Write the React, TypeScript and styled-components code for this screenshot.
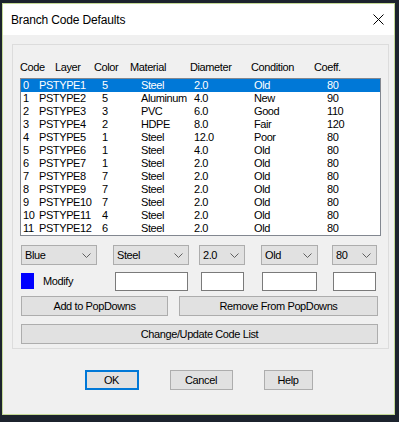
import React, { useState } from 'react';
import styled, { createGlobalStyle } from 'styled-components';

const GlobalStyle = createGlobalStyle`
    html, body {
        margin: 0;
        padding: 0;
        background: #1c232d;
    }
    body {
        font-family: "Liberation Sans", Arial, sans-serif;
        font-size: 11px;
        letter-spacing: -0.4px;
        color: #000;
    }
`;

const Screen = styled.div`
    width: 399px;
    height: 422px;
    padding: 3px 0 0 2px;
    box-sizing: border-box;
    overflow: hidden;
`;

const Window = styled.div`
    width: 393px;
    height: 412px;
    box-sizing: border-box;
    border: 1px solid #c3d896;
    background: #f0f0f0;
    display: flex;
    flex-direction: column;
`;

const TitleBar = styled.div`
    height: 31px;
    background: #fff;
    display: flex;
    align-items: center;
    justify-content: space-between;
    padding: 0 9px 0 8px;
    font-size: 12px;
    letter-spacing: -0.15px;
`;

const CloseIcon = styled.svg`
    width: 11px;
    height: 11px;
    margin-right: 1px;
`;

const Body = styled.div`
    flex: 1;
    display: flex;
    flex-direction: column;
    padding: 9px 5px 0 9px;
`;

const GroupBox = styled.div`
    border: 1px solid #dcdcdc;
    padding: 16px 8px 4px 7px;
    display: flex;
    flex-direction: column;
`;

const HeaderRow = styled.div`
    display: grid;
    grid-template-columns: 35px 39px 36px 60px 61px 63px 1fr;
    height: 13px;
    line-height: 13px;
    margin-bottom: 4px;
`;

const ListBox = styled.div`
    width: 361px;
    height: 158px;
    box-sizing: border-box;
    border: 1px solid #828790;
    background: #fff;
    display: flex;
    flex-direction: column;
`;

const ListRow = styled.div<{ $selected?: boolean }>`
    display: grid;
    grid-template-columns: 16px 63px 39px 53px 60px 73px 1fr;
    height: 13px;
    line-height: 13px;
    padding-left: 2px;
    background: ${p => (p.$selected ? '#0078d7' : 'transparent')};
    color: ${p => (p.$selected ? '#fff' : '#000')};
`;

const FieldGrid = styled.div`
    display: grid;
    grid-template-columns: 76px 16px 76px 10px 46px 16px 57px 14px 45px;
    grid-template-rows: 20px 19px;
    row-gap: 7px;
    margin: 9px 0 0 1px;
`;

const Combo = styled.div<{ $col: number }>`
    grid-column: ${p => p.$col};
    grid-row: 1;
    box-sizing: border-box;
    border: 1px solid #adadad;
    background: #e1e1e1;
    display: flex;
    align-items: center;
    justify-content: space-between;
    padding: 0 5px 0 3px;
`;

const Chevron = styled.svg`
    width: 9px;
    height: 5px;
`;

const TextBox = styled.div<{ $col: number; $w: number }>`
    grid-column: ${p => p.$col};
    grid-row: 2;
    justify-self: center;
    width: ${p => p.$w}px;
    box-sizing: border-box;
    border: 1px solid #7a7a7a;
    background: #fff;
`;

const ColorCell = styled.div`
    grid-column: 1 / span 2;
    grid-row: 2;
    display: flex;
    align-items: center;
    gap: 9px;
    margin-top: -2px;
`;

const Swatch = styled.div`
    width: 13px;
    height: 16px;
    background: #0000ff;
`;

const ButtonRow = styled.div<{ $top: number }>`
    display: flex;
    gap: 11px;
    margin: ${p => p.$top}px 0 0 1px;
`;

const Button = styled.button<{ $w: number; $default?: boolean }>`
    width: ${p => p.$w}px;
    height: 20px;
    box-sizing: border-box;
    border: ${p => (p.$default ? '2px solid #0078d7' : '1px solid #adadad')};
    background: #e1e1e1;
    font-family: inherit;
    font-size: 11px;
    letter-spacing: -0.4px;
    color: #000;
    padding: 0;
`;

const Footer = styled.div`
    display: flex;
    justify-content: center;
    gap: 31px;
    margin-top: 21px;
    padding-right: 4px;
`;

const rows = [
    ['0', 'PSTYPE1', '5', 'Steel', '2.0', 'Old', '80'],
    ['1', 'PSTYPE2', '5', 'Aluminum', '4.0', 'New', '90'],
    ['2', 'PSTYPE3', '3', 'PVC', '6.0', 'Good', '110'],
    ['3', 'PSTYPE4', '2', 'HDPE', '8.0', 'Fair', '120'],
    ['4', 'PSTYPE5', '1', 'Steel', '12.0', 'Poor', '80'],
    ['5', 'PSTYPE6', '1', 'Steel', '4.0', 'Old', '80'],
    ['6', 'PSTYPE7', '1', 'Steel', '2.0', 'Old', '80'],
    ['7', 'PSTYPE8', '7', 'Steel', '2.0', 'Old', '80'],
    ['8', 'PSTYPE9', '7', 'Steel', '2.0', 'Old', '80'],
    ['9', 'PSTYPE10', '7', 'Steel', '2.0', 'Old', '80'],
    ['10', 'PSTYPE11', '4', 'Steel', '2.0', 'Old', '80'],
    ['11', 'PSTYPE12', '6', 'Steel', '2.0', 'Old', '80'],
];

const headers = ['Code', 'Layer', 'Color', 'Material', 'Diameter', 'Condition', 'Coeff.'];

const combos = [
    { col: 1, value: 'Blue' },
    { col: 3, value: 'Steel' },
    { col: 5, value: '2.0' },
    { col: 7, value: 'Old' },
    { col: 9, value: '80' },
];

const boxes = [
    { col: 3, w: 73 },
    { col: 5, w: 43 },
    { col: 7, w: 55 },
    { col: 9, w: 43 },
];

const App: React.FC = () => {
    const [selected, setSelected] = useState(0);

    return (
        <Screen>
            <GlobalStyle />
            <Window>
                <TitleBar>
                    <span>Branch Code Defaults</span>
                    <CloseIcon viewBox="0 0 11 11">
                        <path d="M0.5 0.5 L10.5 10.5 M10.5 0.5 L0.5 10.5" stroke="#000" strokeWidth="1" />
                    </CloseIcon>
                </TitleBar>
                <Body>
                    <GroupBox>
                        <HeaderRow>
                            {headers.map(h => <span key={h}>{h}</span>)}
                        </HeaderRow>
                        <ListBox>
                            {rows.map((r, i) => (
                                <ListRow key={r[0]} $selected={i === selected} onClick={() => setSelected(i)}>
                                    {r.map((c, j) => <span key={j}>{c}</span>)}
                                </ListRow>
                            ))}
                        </ListBox>
                        <FieldGrid>
                            {combos.map(c => (
                                <Combo key={c.col} $col={c.col}>
                                    <span>{c.value}</span>
                                    <Chevron viewBox="0 0 9 5">
                                        <polyline points="0.5,0.5 4.5,4.5 8.5,0.5" fill="none" stroke="#606060" strokeWidth="1" />
                                    </Chevron>
                                </Combo>
                            ))}
                            <ColorCell>
                                <Swatch />
                                <span>Modify</span>
                            </ColorCell>
                            {boxes.map(b => <TextBox key={b.col} $col={b.col} $w={b.w} />)}
                        </FieldGrid>
                        <ButtonRow $top={5}>
                            <Button $w={147}>Add to PopDowns</Button>
                            <Button $w={199}>Remove From PopDowns</Button>
                        </ButtonRow>
                        <ButtonRow $top={8}>
                            <Button $w={357}>Change/Update Code List</Button>
                        </ButtonRow>
                    </GroupBox>
                    <Footer>
                        <Button $w={54} $default>OK</Button>
                        <Button $w={63}>Cancel</Button>
                        <Button $w={49}>Help</Button>
                    </Footer>
                </Body>
            </Window>
        </Screen>
    );
};

export default App;
